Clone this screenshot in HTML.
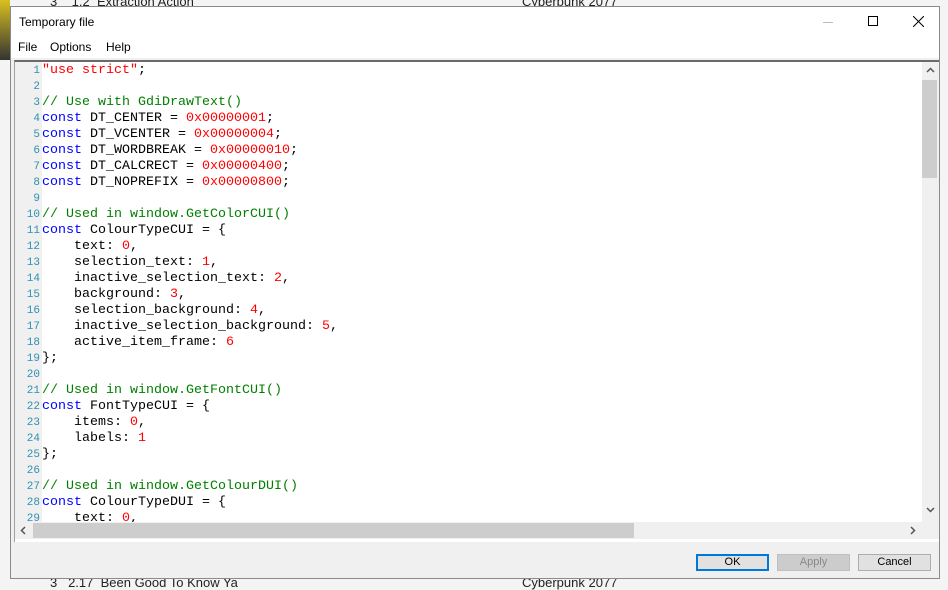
<!DOCTYPE html>
<html><head><style>
body{margin:0;width:948px;height:589px;overflow:hidden;background:#f4f4f4;font-family:"Liberation Sans",sans-serif;position:relative}
.bg{position:absolute;font-size:13px;color:#222}
.win{position:absolute;left:10px;top:6px;width:930px;height:573px;background:#f0f0f0;border:1px solid #8a8a8a;box-sizing:border-box}
.title{position:absolute;left:0;top:0;width:100%;height:30px;background:#fff;font-size:12px}
.menu{position:absolute;left:0;top:30px;width:100%;height:21px;background:#fff;font-size:12px}
.ed{position:absolute;left:3px;top:53px;width:924px;height:480px;border-top:2px solid #6a6a6a;border-left:1px solid #a0a0a0;background:#fff;overflow:hidden}
.gut{position:absolute;left:0;top:0;width:27px;height:460px;background:#f0f0f0}
pre{position:absolute;margin:0;left:27px;top:1px;font-family:"Liberation Mono",monospace;font-size:13.33px;line-height:16px;color:#000}
.nums{position:absolute;left:0;top:1px;width:25px;text-align:right;font-family:"Liberation Mono",monospace;font-size:11px;line-height:16px;color:#2b91af;margin:0}
.k{color:#0000ff}.c{color:#008000}.n{color:#ff0000}.s{color:#ff0000}
.vs{position:absolute;right:0;top:0;width:17px;height:460px;background:#f0f0f0}
.hs{position:absolute;left:0;top:460px;width:907px;height:17px;background:#f0f0f0}
.btn{position:absolute;top:547px;width:71px;height:15px;border:1px solid #adadad;background:#e1e1e1;font-size:11px;text-align:center;line-height:15px}
</style></head><body>
<div class="bg" style="left:50px;top:-6px">3&nbsp;&nbsp;&nbsp;&nbsp;1.2&nbsp;&nbsp;Extraction Action</div>
<div class="bg" style="left:522px;top:-6px">Cyberpunk 2077</div>
<div class="bg" style="left:50px;top:575px">3&nbsp;&nbsp;&nbsp;2.17&nbsp;&nbsp;Been Good To Know Ya</div>
<div class="bg" style="left:522px;top:575px">Cyberpunk 2077</div>
<div style="position:absolute;left:0;top:0;width:10px;height:60px;background:linear-gradient(#d8c020,#333)"></div>
<div class="win">
<div class="title"><span style="position:absolute;left:8px;top:8px">Temporary file</span>
<div style="position:absolute;left:812px;top:15px;width:10px;height:1px;background:#bbb"></div>
<div style="position:absolute;left:857px;top:9px;width:8px;height:8px;border:1px solid #000"></div>
<svg style="position:absolute;left:902px;top:9px" width="11" height="11"><path d="M0 0L11 11M11 0L0 11" stroke="#000" stroke-width="1"/></svg>
</div>
<div class="menu"><span style="position:absolute;left:7px;top:3px">File</span><span style="position:absolute;left:39px;top:3px">Options</span><span style="position:absolute;left:95px;top:3px">Help</span></div>
<div class="ed">
<div class="gut"></div>
<pre class="nums">1
2
3
4
5
6
7
8
9
10
11
12
13
14
15
16
17
18
19
20
21
22
23
24
25
26
27
28
29</pre>
<pre><span class="s">"use strict"</span>;

<span class="c">// Use with GdiDrawText()</span>
<span class="k">const</span> DT_CENTER = <span class="n">0x00000001</span>;
<span class="k">const</span> DT_VCENTER = <span class="n">0x00000004</span>;
<span class="k">const</span> DT_WORDBREAK = <span class="n">0x00000010</span>;
<span class="k">const</span> DT_CALCRECT = <span class="n">0x00000400</span>;
<span class="k">const</span> DT_NOPREFIX = <span class="n">0x00000800</span>;

<span class="c">// Used in window.GetColorCUI()</span>
<span class="k">const</span> ColourTypeCUI = {
    text: <span class="n">0</span>,
    selection_text: <span class="n">1</span>,
    inactive_selection_text: <span class="n">2</span>,
    background: <span class="n">3</span>,
    selection_background: <span class="n">4</span>,
    inactive_selection_background: <span class="n">5</span>,
    active_item_frame: <span class="n">6</span>
};

<span class="c">// Used in window.GetFontCUI()</span>
<span class="k">const</span> FontTypeCUI = {
    items: <span class="n">0</span>,
    labels: <span class="n">1</span>
};

<span class="c">// Used in window.GetColourDUI()</span>
<span class="k">const</span> ColourTypeDUI = {
    text: <span class="n">0</span>,</pre>
<div class="vs"><div style="position:absolute;left:0;top:18px;width:15px;height:98px;background:#cdcdcd"></div>
<svg style="position:absolute;left:4px;top:5px" width="9" height="6"><path d="M1 5L4.5 1.5L8 5" stroke="#555" fill="none" stroke-width="1.5"/></svg>
<svg style="position:absolute;left:4px;top:445px" width="9" height="6"><path d="M1 1L4.5 4.5L8 1" stroke="#555" fill="none" stroke-width="1.5"/></svg></div>
<div class="hs"><div style="position:absolute;left:18px;top:1px;width:601px;height:15px;background:#cdcdcd"></div>
<svg style="position:absolute;left:5px;top:4px" width="6" height="9"><path d="M5 1L1.5 4.5L5 8" stroke="#555" fill="none" stroke-width="1.5"/></svg>
<svg style="position:absolute;left:895px;top:4px" width="6" height="9"><path d="M1 1L4.5 4.5L1 8" stroke="#555" fill="none" stroke-width="1.5"/></svg></div>
<div style="position:absolute;left:907px;top:460px;width:17px;height:17px;background:#f0f0f0"></div>
</div>
<div class="btn" style="left:685px;border:2px solid #0078d7;width:69px;height:13px;line-height:13px">OK</div>
<div class="btn" style="left:766px;background:#ccc;border-color:#bfbfbf;color:#888">Apply</div>
<div class="btn" style="left:847px">Cancel</div>
</div>
</body></html>
